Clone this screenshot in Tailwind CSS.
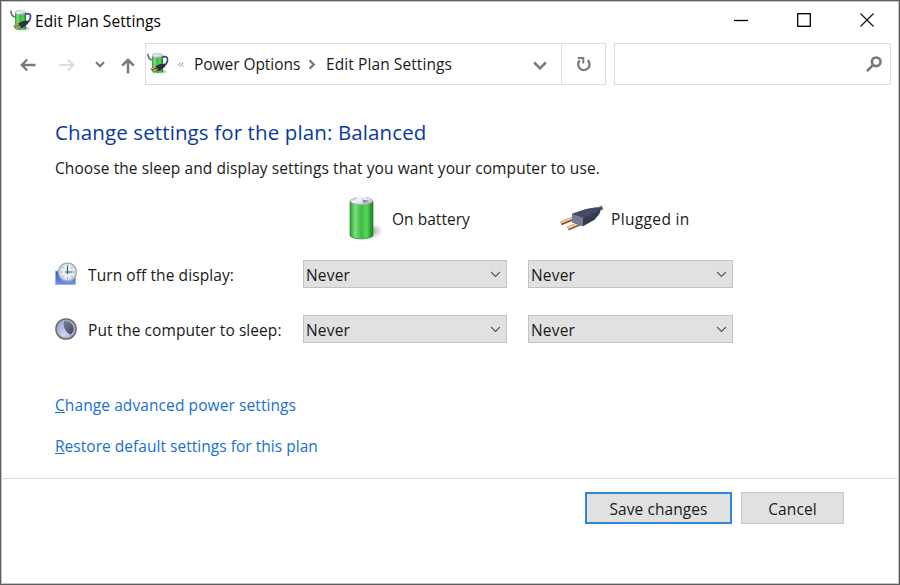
<!DOCTYPE html>
<html lang="en">
<head>
    <meta charset="UTF-8">
    <meta name="viewport" content="width=device-width, initial-scale=1.0">
    <title>Edit Plan Settings</title>
    <script src="https://cdn.jsdelivr.net/npm/@tailwindcss/browser@4"></script>
</head>
<body class="font-['Open_Sans','Noto_Sans',sans-serif] text-[15.5px] tracking-[0.09px] text-[#1a1a1a]">
    <!-- Shared icons -->
    <svg class="absolute w-0 h-0">
        <defs>
            <linearGradient id="green" x1="0" x2="1" y1="0" y2="0">
                <stop offset="0" stop-color="#2c9a36"/>
                <stop offset=".22" stop-color="#7be07c"/>
                <stop offset=".5" stop-color="#3fb848"/>
                <stop offset=".72" stop-color="#56d85a"/>
                <stop offset="1" stop-color="#167a22"/>
            </linearGradient>
            <linearGradient id="metal" x1="0" x2="1" y1="0" y2="1">
                <stop offset="0" stop-color="#a9b2b8"/>
                <stop offset=".4" stop-color="#f5f5fb"/>
                <stop offset="1" stop-color="#9a9eb5"/>
            </linearGradient>
            <linearGradient id="plug" x1="0" x2="1" y1="0" y2="1">
                <stop offset="0" stop-color="#6a7088"/>
                <stop offset=".5" stop-color="#3a3f58"/>
                <stop offset="1" stop-color="#20243a"/>
            </linearGradient>
            <linearGradient id="screen" x1="0" x2="0" y1="0" y2="1">
                <stop offset="0" stop-color="#3157c4"/>
                <stop offset="1" stop-color="#6c93ea"/>
            </linearGradient>
            <linearGradient id="moon" x1="0" x2="1" y1="0" y2="1">
                <stop offset="0" stop-color="#8996c4"/>
                <stop offset=".6" stop-color="#c9d4fb"/>
                <stop offset="1" stop-color="#8f9cca"/>
            </linearGradient>
            <linearGradient id="moonShade" x1="0" x2="1" y1="0" y2="1">
                <stop offset="0" stop-color="#777d98"/>
                <stop offset="1" stop-color="#474955"/>
            </linearGradient>
            <radialGradient id="shadow">
                <stop offset="0" stop-color="#777" stop-opacity=".8"/>
                <stop offset="1" stop-color="#999" stop-opacity="0"/>
            </radialGradient>
            <symbol id="power" viewBox="0 0 22 23">
                <ellipse cx="15" cy="19.5" rx="6" ry="2.5" fill="url(#shadow)"/>
                <path d="M5 3.5v16c1.500 2.200 9.500 2.200 11 0v-16z" fill="url(#green)"/>
                <ellipse cx="10.500" cy="3.500" rx="5.500" ry="2.200" fill="url(#metal)" stroke="#8d97a0" stroke-width=".5"/>
                <ellipse cx="10.500" cy="2" rx="2.500" ry="1.300" fill="#d3dae4"/>
                <path d="M.8 1.800C1 5 2.500 7.500 5.200 8" fill="none" stroke="#5b6584" stroke-width="1.600"/>
                <path d="M15.500 5.200c3.500-1.700 5.500.2 5 3.300-.4 2.800-1.800 4.500-3.800 6.200" fill="none" stroke="#414a70" stroke-width="1.700"/>
                <path d="M8 14.500l4.500-2.300 6-.8-1 3.800-5 3.800-2.800-.6z" fill="#30303a"/>
                <path d="M3.800 17.500l5-2.200M6 20l4.500-2.600" stroke="#6e4f2b" stroke-width="2"/>
                <path d="M3.800 17.200l5-2.200M6 19.700l4.500-2.600" stroke="#e5c58f" stroke-width="1"/>
            </symbol>
            <symbol id="chevron" viewBox="0 0 10 7">
                <path d="M.6 1l4.400 4.400L9.400 1" fill="none" stroke="#555" stroke-width="1.100"/>
            </symbol>
        </defs>
    </svg>

    <div class="relative flex flex-col w-[900px] h-[585px] bg-white border border-[#5f5f5f] overflow-hidden">
        <!-- Soft inner edge of the window frame -->
        <div class="absolute inset-0 border border-[#c4c4c4]"></div>

        <!-- Title bar -->
        <header class="relative h-[42px] flex items-center pl-[9px] pr-[25px] text-black">
            <svg class="w-[22px] h-[23px] -mt-[4px]"><use href="#power"/></svg>
            <h1 class="ml-[3px] -mt-[1px]">Edit Plan Settings</h1>
            <div class="ml-auto -mt-[5px] flex items-center gap-[49px]">
                <svg class="w-[14px] h-[14px]" viewBox="0 0 14 14"><path d="M0 7.500h14" stroke="#000" stroke-width="1.300"/></svg>
                <svg class="w-[14px] h-[14px]" viewBox="0 0 14 14"><rect x=".7" y=".7" width="12.600" height="12.600" fill="none" stroke="#000" stroke-width="1.300"/></svg>
                <svg class="w-[14px] h-[14px]" viewBox="0 0 14 14"><path d="M.5.5l13 13M13.500.5l-13 13" stroke="#111" stroke-width="1.200"/></svg>
            </div>
        </header>

        <!-- Navigation -->
        <nav class="relative h-[42px] flex items-stretch pl-[19px] pr-[8px]">
            <div class="flex items-center w-[125px]">
                <svg class="w-[16px] h-[14px] mt-[1px]" viewBox="0 0 16 14"><path d="M15.500 7H2M7.200 1.500L1.700 7l5.500 5.500" fill="none" stroke="#7a7a7a" stroke-width="2.300"/></svg>
                <svg class="ml-[23px] mt-[1px] w-[16px] h-[14px]" viewBox="0 0 16 14"><path d="M.5 7H14M8.800 1.500L14.300 7l-5.500 5.500" fill="none" stroke="#dcdcdc" stroke-width="2.200"/></svg>
                <svg class="ml-[20px] mt-[1px] w-[10px] h-[7px]" viewBox="0 0 10 7"><path d="M1 1.200l4 4 4-4" fill="none" stroke="#7a7a7a" stroke-width="2.200"/></svg>
                <svg class="ml-[16px] mt-[3px] w-[14px] h-[16px]" viewBox="0 0 14 16"><path d="M7 15.500V2M1.200 7.600L7 1.800l5.800 5.800" fill="none" stroke="#7a7a7a" stroke-width="2.500"/></svg>
            </div>
            <div class="flex w-[461px] border border-[#dedede]">
                <div class="flex flex-1 items-center pl-[1px]">
                    <svg class="w-[22px] h-[23px] -mt-[2px]"><use href="#power"/></svg>
                    <svg class="ml-[9px] w-[6px] h-[5px]" viewBox="0 0 6 5"><path d="M2.600.5l-2 2 2 2M5.400.5l-2 2 2 2" fill="none" stroke="#666" stroke-width=".8"/></svg>
                    <span class="ml-[10px] mt-[2px] w-[106px] whitespace-nowrap tracking-[-0.05px]">Power Options</span>
                    <svg class="ml-[8px] w-[8px] h-[11px]" viewBox="0 0 8 11"><path d="M1.500 1.200l4.300 4.300-4.300 4.300" fill="none" stroke="#777" stroke-width="2.300"/></svg>
                    <span class="ml-[10px] mt-[2px] whitespace-nowrap">Edit Plan Settings</span>
                    <svg class="ml-auto mr-[14px] mt-[2px] w-[14px] h-[9px]" viewBox="0 0 14 9"><path d="M1.200 1.500L7 7.300l5.800-5.800" fill="none" stroke="#7a7a7a" stroke-width="2.500"/></svg>
                </div>
                <div class="flex items-center justify-center w-[44px] border-l border-[#dedede]">
                    <svg class="w-[16px] h-[16px] ml-[1px]" viewBox="0 0 16 16"><path d="M3.800 4.400A5.700 5.700 0 1 0 11.800 4.200" fill="none" stroke="#7a7a7a" stroke-width="2.300"/><path d="M1.800 2.100h5.500v5.300" fill="none" stroke="#7a7a7a" stroke-width="2"/></svg>
                </div>
            </div>
            <div class="ml-[8px] flex flex-1 items-center justify-end border border-[#dedede] pr-[8px]">
                <svg class="w-[16px] h-[16px]" viewBox="0 0 16 16"><circle cx="10.200" cy="5.800" r="4.300" fill="none" stroke="#777" stroke-width="2.600"/><path d="M7.200 8.800L.9 15.100" stroke="#777" stroke-width="2.600"/></svg>
            </div>
        </nav>

        <!-- Plan settings -->
        <main class="relative h-[393px] pl-[54px] pt-[32px]">
            <h2 class="h-[30px] leading-[30px] text-[20.5px] tracking-[0.12px] text-[#0a3a9b]">Change settings for the plan: Balanced</h2>
            <p class="mt-[9px] h-[24px] leading-[24px] whitespace-nowrap">Choose the sleep and display settings that you want your computer to use.</p>

            <div class="mt-[13px] h-[48px] flex items-center">
                <div class="flex items-center ml-[292px] w-[212px]">
                    <svg class="w-[36px] h-[46px] mt-[2px]" viewBox="0 0 36 46">
                        <ellipse cx="24" cy="36" rx="12" ry="8" fill="url(#shadow)"/>
                        <path d="M3 6v35c3 3.800 19 3.800 23 0V6z" fill="url(#green)"/>
                        <path d="M3 6v35c3 3.800 19 3.800 23 0V6z" fill="none" stroke="#238c2c" stroke-width=".7"/>
                        <ellipse cx="14.500" cy="6" rx="11.300" ry="3.700" fill="url(#metal)" stroke="#9daaa3" stroke-width=".7"/>
                        <ellipse cx="14" cy="4" rx="5" ry="2.400" fill="#eff1f7"/>
                        <path d="M15 4.500l7 1.300-5 2.500z" fill="#8588ad"/>
                    </svg>
                    <span class="ml-[9px] mt-[6px] tracking-[0.03px]">On battery</span>
                </div>
                <div class="flex items-center">
                    <svg class="w-[46px] h-[26px] mt-[2px]" viewBox="0 0 46 26">
                        <path d="M36 5.500l7.500-3" stroke="#555963" stroke-width="4"/>
                        <path d="M2 18.300l16-6.500M9 23.700l15-6.500" stroke="#80552c" stroke-width="4"/>
                        <path d="M2 17.500l16-6.500M9 22.900l15-6.500" stroke="#edc99d" stroke-width="2.400"/>
                        <path d="M13 8.800L27 4 37 2.300l5 1.500-1.500 5-5 6L24 21.300l-11-4z" fill="url(#plug)"/>
                        <path d="M13 9l11 3.600v8.700L13 17.300z" fill="#777c92"/>
                        <path d="M13.500 8.800L27 4.300 37 2.800l3.500 1.400-5.500 4.300-11 4z" fill="#454a65"/>
                    </svg>
                    <span class="ml-[6px] mt-[6px] tracking-[0.35px]">Plugged in</span>
                </div>
            </div>

            <div class="mt-[19px] h-[28px] grid grid-cols-[248px_204px_205px] items-stretch">
                <div class="flex items-center">
                    <svg class="w-[22px] h-[24px] -mt-[1px]" viewBox="0 0 22 24">
                        <path d="M.5 9h20v13.500H.5z" fill="url(#screen)" stroke="#9eb0dd" stroke-width="1"/>
                        <circle cx="12.500" cy="10" r="9" fill="#d8e6ef" stroke="#a8aeb4" stroke-width="1.500"/>
                        <circle cx="12.500" cy="10" r="6.300" fill="#e4eff5"/>
                        <path d="M12.500 3v1.500M12.500 15.500V17M5.500 10H7M18 10h1.500M7.500 5l1 1M17.500 5l-1 1M7.500 15l1-1M17.500 15l-1-1" stroke="#8096a5" stroke-width="1"/>
                        <path d="M12.500 4.500V10h5M12.500 10v2M12.500 10H10" fill="none" stroke="#46525c" stroke-width="1.100"/>
                    </svg>
                    <span class="ml-[11px] mt-[3px] whitespace-nowrap">Turn off the display:</span>
                </div>
                <button class="flex items-center justify-between bg-[#e1e1e1] border border-[#c3c3c3] pl-[2px] pr-[5px]"><span class="mt-[3px] tracking-[0.2px]">Never</span><svg class="w-[11px] h-[7px]"><use href="#chevron"/></svg></button>
                <button class="ml-[21px] w-[205px] flex items-center justify-between bg-[#e1e1e1] border border-[#c3c3c3] pl-[2px] pr-[5px]"><span class="mt-[3px] tracking-[0.2px]">Never</span><svg class="w-[11px] h-[7px]"><use href="#chevron"/></svg></button>
            </div>

            <div class="mt-[27px] h-[27px] grid grid-cols-[248px_204px_205px] items-stretch">
                <div class="flex items-center">
                    <svg class="w-[22px] h-[22px]" viewBox="0 0 22 22">
                        <circle cx="11" cy="11" r="10" fill="url(#moon)" stroke="#66686d" stroke-width="1.600"/>
                        <circle cx="11" cy="11" r="8.900" fill="none" stroke="#a6a9b2" stroke-width="1"/>
                        <path d="M9 3.500c3.500-1.500 9 1.500 9.700 6.500.3 3-1 5.500-3.200 6.700C11.500 15 7.300 9 9 3.500z" fill="url(#moonShade)"/>
                    </svg>
                    <span class="ml-[11px] mt-[3px] whitespace-nowrap tracking-[0.06px]">Put the computer to sleep:</span>
                </div>
                <button class="flex items-center justify-between bg-[#e1e1e1] border border-[#c3c3c3] pl-[2px] pr-[5px]"><span class="mt-[3px] tracking-[0.2px]">Never</span><svg class="w-[11px] h-[7px]"><use href="#chevron"/></svg></button>
                <button class="ml-[21px] w-[205px] flex items-center justify-between bg-[#e1e1e1] border border-[#c3c3c3] pl-[2px] pr-[5px]"><span class="mt-[3px] tracking-[0.2px]">Never</span><svg class="w-[11px] h-[7px]"><use href="#chevron"/></svg></button>
            </div>

            <div class="mt-[51px] flex flex-col items-start gap-[17px] leading-[24px] text-[#1a6fd0]">
                <a href="#"><span class="underline">C</span>hange advanced power settings</a>
                <a href="#" class="tracking-[0.03px]"><span class="underline">R</span>estore default settings for this plan</a>
            </div>
        </main>

        <!-- Actions -->
        <footer class="relative flex flex-1 items-start justify-end gap-[9px] border-t border-[#d9d9d9] pt-[13px] pr-[55px]">
            <button class="w-[147px] h-[32px] pt-[3px] bg-[#e1e1e1] border-2 border-[#2b88d8]">Save changes</button>
            <button class="w-[103px] h-[32px] pt-[3px] bg-[#e1e1e1] border border-[#c6c6c6] tracking-[0.1px]">Cancel</button>
        </footer>
    </div>
</body>
</html>
